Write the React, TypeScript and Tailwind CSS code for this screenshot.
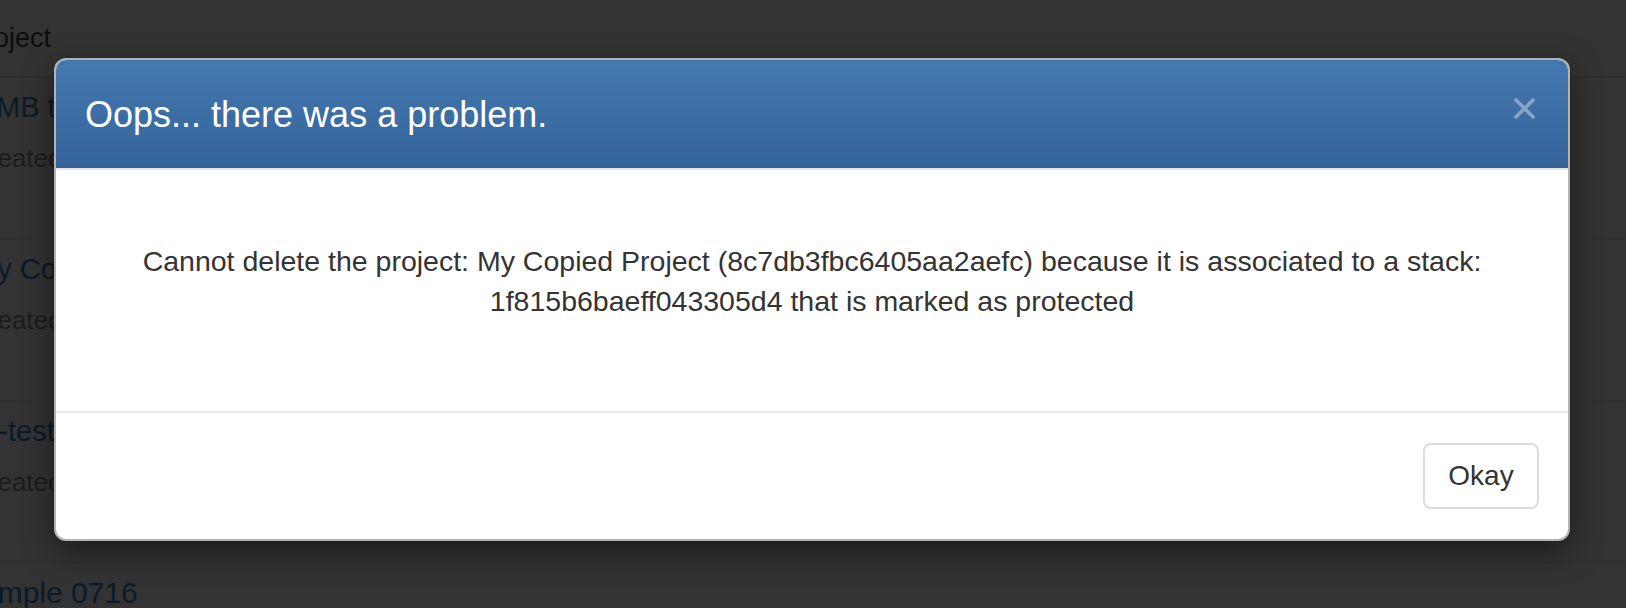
// Background rows of the project list, mostly hidden by the overlay
const rows = [
  { title: "MB test project", cut: "-ml-[4px]" },
  { title: "My Copied Project", cut: "-ml-[27px]" },
  { title: "e2e-test", cut: "-ml-[50px]" },
];

function ErrorModal() {
  return (
    <div className="absolute left-[54px] top-[58px] w-[1516px] overflow-hidden rounded-[12px] border-2 border-black/30 bg-white shadow-[0_10px_30px_rgba(0,0,0,0.5)]">
      {/* Header */}
      <div className="flex h-[110px] items-center justify-between border-b-2 border-[#e5e5e5] bg-gradient-to-b from-[#4479af] to-[#34639a] pl-[29px] pr-[32px]">
        <h4 className="text-[36px] leading-[51px] text-white">Oops... there was a problem.</h4>
        <button className="mb-[12px] flex h-[24px] w-[24px] items-center justify-center text-[#86a6cc]">
          <svg viewBox="0 0 24 24" className="h-[23px] w-[23px]">
            <path d="M2 2 L22 22 M22 2 L2 22" stroke="currentColor" strokeWidth="3.6" fill="none" />
          </svg>
        </button>
      </div>

      {/* Body */}
      <div className="flex h-[241px] flex-col items-center justify-center px-[30px] pb-[20px] text-center text-[28.5px] leading-[40px] text-[#333]">
        <p>
          Cannot delete the project: My Copied Project (8c7db3fbc6405aa2aefc) because it is associated to a stack:
          <br />
          1f815b6baeff043305d4 that is marked as protected
        </p>
      </div>

      {/* Footer */}
      <div className="flex justify-end border-t-2 border-[#e5e5e5] px-[29px] py-[30px]">
        <button className="h-[66px] w-[116px] rounded-[8px] border-2 border-[#dcdcdc] bg-white text-[28px] text-[#333]">
          Okay
        </button>
      </div>
    </div>
  );
}

export default function App() {
  return (
    <div className="relative h-[608px] w-full overflow-hidden bg-[#333333] font-['Liberation_Sans',Arial,sans-serif]">
      {/* Page content dimmed behind the modal backdrop */}
      <div className="flex h-[78px] items-center border-b-2 border-[#2e2e2e] text-[27px] font-medium text-[#0d0d0d]">
        <span className="-ml-[33px]">Project</span>
      </div>
      {rows.map((row) => (
        <div key={row.title} className="h-[162px] border-b-2 border-[#303030] pt-[9px]">
          <div className={`${row.cut} whitespace-nowrap text-[29px] leading-[40px] text-[#0b1a29]`}>{row.title}</div>
          <div className="-ml-[30px] mt-[16px] whitespace-nowrap text-[26px] leading-[30px] text-[#1c1c1c]">
            Created 2 days ago
          </div>
        </div>
      ))}
      <div className="-ml-[54px] whitespace-nowrap pt-[9px] text-[30px] leading-[40px] text-[#0b1a29]">Example 0716</div>

      <ErrorModal />
    </div>
  );
}
